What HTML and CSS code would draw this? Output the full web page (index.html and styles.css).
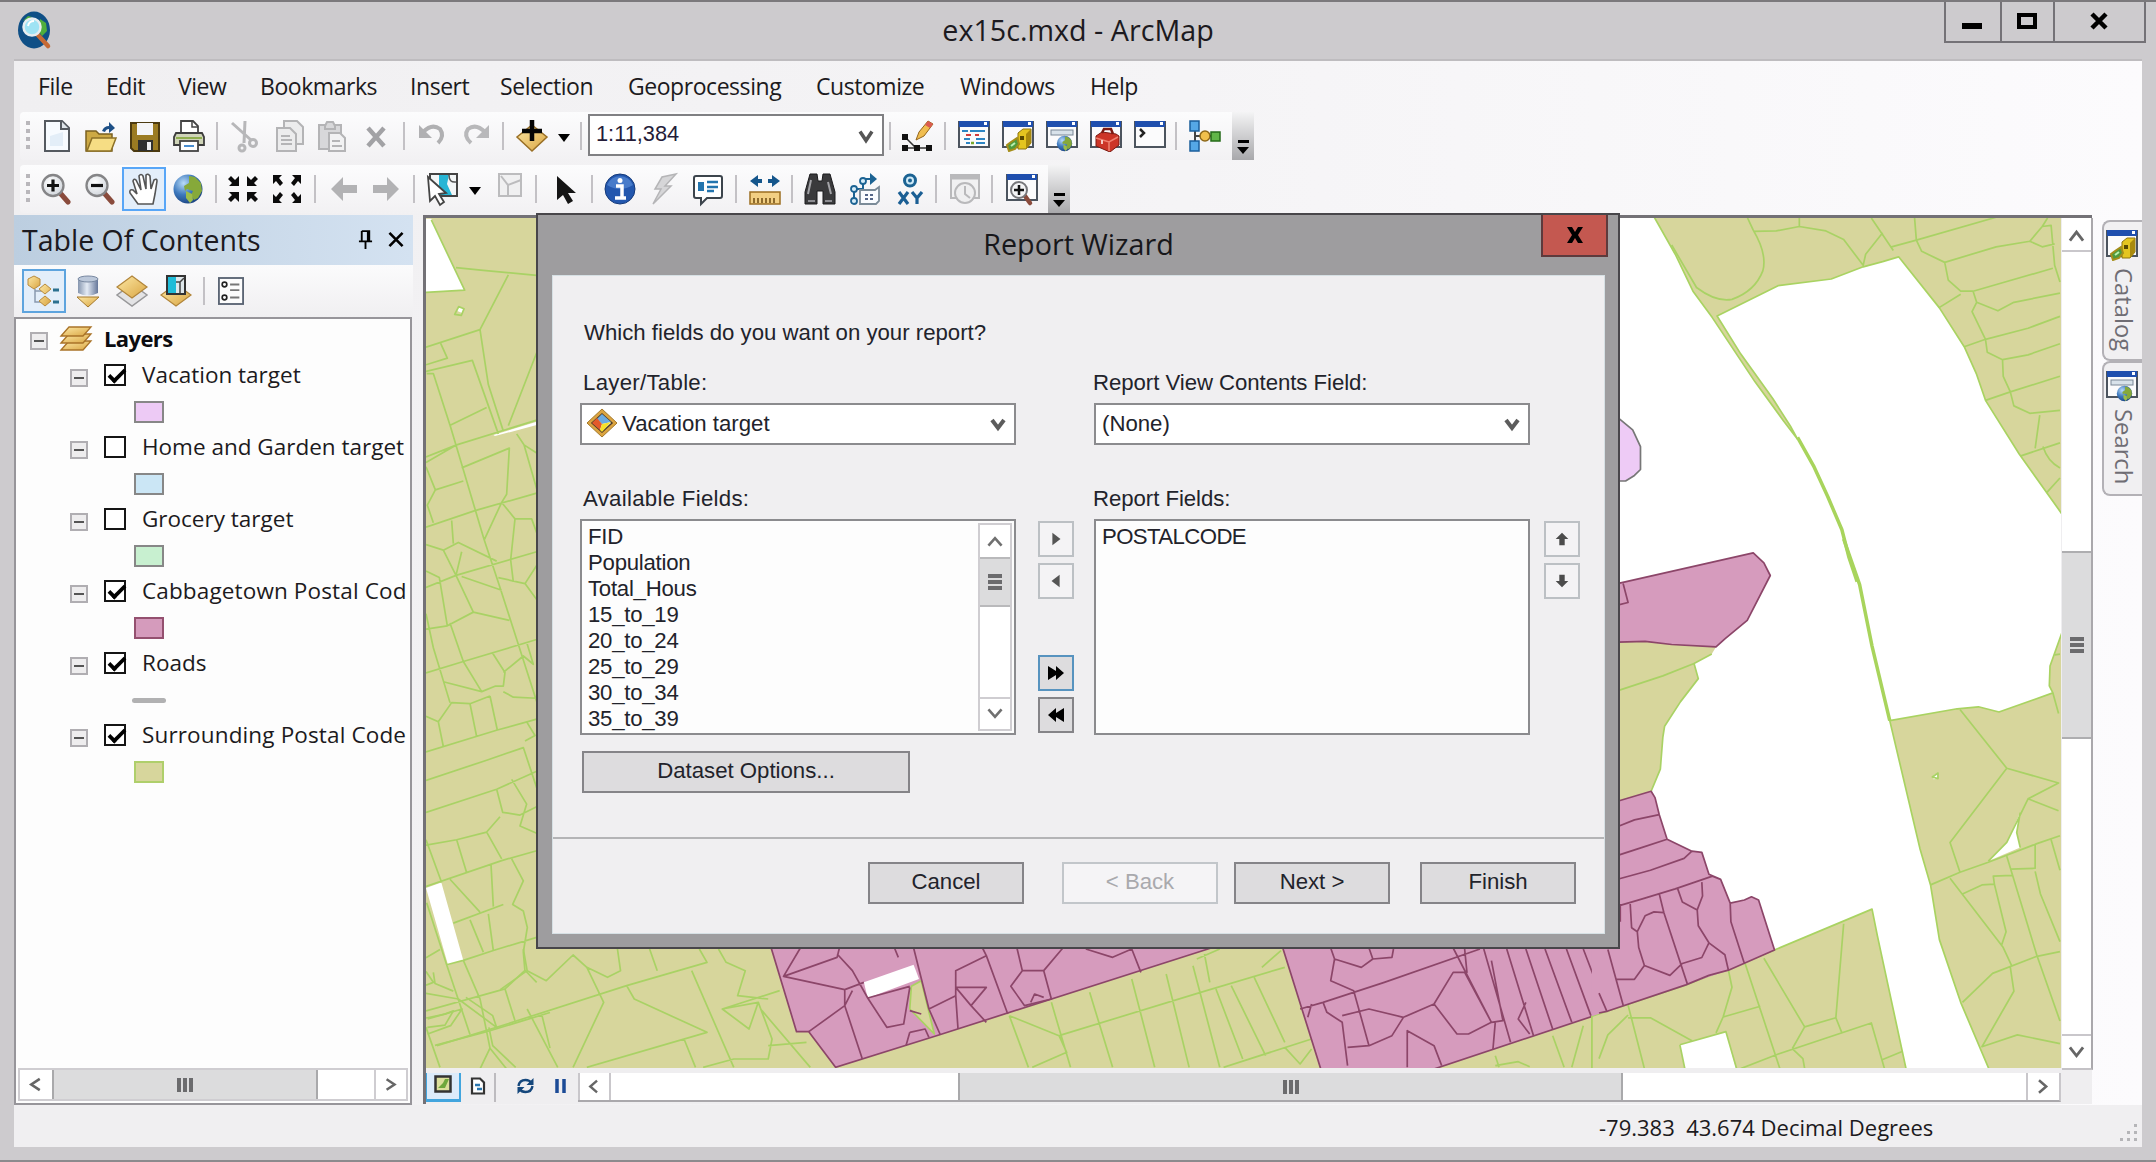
FILE: index.html
```html
<!DOCTYPE html>
<html lang="en">
<head>
<meta charset="utf-8">
<title>ex15c.mxd - ArcMap</title>
<link rel="stylesheet" href="styles.css">
</head>
<body>
<svg class="defs" width="0" height="0">
  <defs>
    <linearGradient id="gold" x1="0" y1="0" x2="1" y2="1"><stop offset="0" stop-color="#fde9a6"/><stop offset="1" stop-color="#d9a441"/></linearGradient>
    <linearGradient id="grey" x1="0" y1="0" x2="1" y2="0"><stop offset="0" stop-color="#8595ae"/><stop offset=".45" stop-color="#e4ebf5"/><stop offset="1" stop-color="#66779a"/></linearGradient>
    <radialGradient id="earth" cx=".35" cy=".3" r=".8"><stop offset="0" stop-color="#b9dcf8"/><stop offset=".5" stop-color="#3d78bd"/><stop offset="1" stop-color="#153b78"/></radialGradient>
    <radialGradient id="lens" cx=".4" cy=".35" r=".7"><stop offset="0" stop-color="#ffffff"/><stop offset="1" stop-color="#cfd4da"/></radialGradient>
    <symbol id="window" viewBox="0 0 32 32">
      <rect x="1" y="2" width="30" height="25" fill="#fbfbfc" stroke="#4c545e" stroke-width="2"/>
      <rect x="1" y="1" width="30" height="6" fill="#1f4fae"/><rect x="26" y="2" width="3" height="3" fill="#fff"/>
    </symbol>
    <symbol id="globe" viewBox="0 0 32 32">
      <circle cx="16" cy="16" r="14.500" fill="url(#earth)"/>
      <path d="M17 3l6 1 6 6 1 8-4 7-4 2-3-5 2-4-6-2-2 2-1-5 5-3z" fill="#86a93a"/><path d="M14 18l6 3 1 6-3 3-4-5z" fill="#9dbd4a"/>
    </symbol>
    <symbol id="catalog" viewBox="0 0 32 32">
      <use href="#window"/>
      <path d="M16 13l5-4h8v14l-5 6h-8z" fill="#e4c520" stroke="#8d7410"/><path d="M24 14l5-5v14l-5 6z" fill="#a98a0d"/><path d="M18 16h4v4h-4z" fill="#584900"/>
      <path d="M5 25l4-3 6-4 2 6-4 5-6 2z" fill="#4f9a3c" stroke="#a58e1a" stroke-width="2"/><path d="M9 26l4-3" stroke="#b9efae" stroke-width="2"/>
    </symbol>
    <symbol id="search" viewBox="0 0 32 32">
      <use href="#window"/><rect x="5" y="10" width="22" height="5" fill="#d8e2ea" stroke="#7a8896"/>
      <svg x="10" y="15" width="17" height="17"><use href="#globe"/></svg>
    </symbol>
    <symbol id="toolbox" viewBox="0 0 32 32">
      <use href="#window"/><path d="M6 16l6-4 14 2 3 2v9l-9 7-14-6z" fill="#cc3527" stroke="#7d1a12"/><path d="M6 18l13 4 9-5M19 22v9" stroke="#f08170" fill="none" stroke-width="1.500"/><path d="M12 13l2-4h7l2 5" stroke="#7d1a12" fill="none" stroke-width="2.500"/><path d="M12 20v4" stroke="#f4c9c0" stroke-width="2"/>
    </symbol>
    <symbol id="glass" viewBox="0 0 32 32">
      <path d="M21 21l7 8" stroke="#8a4b3c" stroke-width="5" stroke-linecap="round"/>
      <circle cx="13" cy="12.500" r="10.500" fill="url(#lens)" stroke="#858587" stroke-width="2.300"/>
    </symbol>
  </defs>
</svg>

<header class="titlebar">
  <svg class="app-icon" viewBox="0 0 32 38"><ellipse cx="16" cy="19" rx="16" ry="18.500" fill="#0f4f86"/><path d="M22 8l6 4 1 8-5 5-4-6zM5 10l5-5 4 1z" fill="#4fae3d"/><path d="M19 23l11 12" stroke="#c66a35" stroke-width="4.500" stroke-linecap="round"/><circle cx="14" cy="16" r="8.500" fill="#9fe3f4" stroke="#e8edf0" stroke-width="2.500"/><path d="M10 15q1-5 6-5" stroke="#fff" stroke-width="2" fill="none"/></svg>
  <h1 class="window-title">ex15c.mxd - ArcMap</h1>
  <div class="window-buttons">
    <button class="wb wb-min"><svg viewBox="0 0 20 18"><path d="M0 14h20" stroke="#000" stroke-width="6"/></svg></button>
    <button class="wb wb-max"><svg viewBox="0 0 20 18"><rect x="2" y="3" width="16" height="12" fill="none" stroke="#000" stroke-width="4"/></svg></button>
    <button class="wb wb-close"><svg viewBox="0 0 20 18"><path d="M3 2l14 14M17 2L3 16" stroke="#000" stroke-width="4.500"/></svg></button>
  </div>
</header>

<div class="client">
  <nav class="menubar">
    <span>File</span><span>Edit</span><span>View</span><span>Bookmarks</span><span>Insert</span><span>Selection</span><span>Geoprocessing</span><span>Customize</span><span>Windows</span><span>Help</span>
  </nav>

  <div class="toolbar standard">
    <i class="grip"></i>
    <span class="tool"><svg viewBox="0 0 32 32"><path d="M4 1h17l7 7v23H4z" fill="#f7fbff" stroke="#555a60" stroke-width="2"/><path d="M20 1v8h8" fill="#dfe5ea" stroke="#555a60" stroke-width="2"/><path d="M9 16v10h13V12" fill="#e3eef8"/></svg></span>
    <span class="tool"><svg viewBox="0 0 32 32"><path d="M1 11h10l3 3h13v17H1z" fill="#cda944" stroke="#7a6020" stroke-width="1.500"/><path d="M7 18h24l-5 13H2z" fill="#f6dd84" stroke="#8d7127" stroke-width="1.500"/><path d="M17 11q2-5 7-5V2l6 6-6 5V9q-3 0-4 3z" fill="#1d4f86"/></svg></span>
    <span class="tool"><svg viewBox="0 0 32 32"><path d="M2 3h28v28H5l-3-3z" fill="#9b7b22" stroke="#4c3a10" stroke-width="2"/><rect x="8" y="3" width="16" height="12" fill="#f4f4f6"/><rect x="9" y="20" width="15" height="11" fill="#30302e"/><rect x="18" y="22" width="4" height="8" fill="#f0f0f0"/></svg></span>
    <span class="tool"><svg viewBox="0 0 32 32"><path d="M8 14V1h12l5 5v8" fill="#fff" stroke="#444" stroke-width="1.800"/><path d="M19 1v6h6" fill="none" stroke="#444" stroke-width="1.500"/><path d="M3 13h26l2 4v8H1v-8z" fill="#cfd4b8" stroke="#3d3d3d" stroke-width="1.800"/><path d="M3 18h26" stroke="#8fae4e" stroke-width="2"/><rect x="7" y="21" width="18" height="10" fill="#fff" stroke="#444" stroke-width="1.800"/><path d="M11 26h10" stroke="#4a8ed0" stroke-width="2"/></svg></span>
    <i class="sep"></i>
    <span class="tool"><svg viewBox="0 0 32 32" fill="none" stroke="#b7b7b9" stroke-width="3"><path d="M4 3l19 17M17 1l-1 22" /><circle cx="14" cy="28" r="3"/><circle cx="25" cy="23" r="3.500"/></svg></span>
    <span class="tool nudge"><svg viewBox="0 0 32 32" fill="#ececed" stroke="#b4b4b6" stroke-width="2"><path d="M10 1h13l6 6v17H10z"/><path d="M3 8h13l6 6v17H3z"/><path d="M7 16h9M7 20h11M7 24h11"/></svg></span>
    <span class="tool"><svg viewBox="0 0 32 32" fill="#d8d8da" stroke="#b4b4b6" stroke-width="2"><path d="M3 5h22v24H3z"/><path d="M9 6l2-4h6l2 4v3H9z"/><path d="M13 13h11l5 5v13H13z" fill="#f2f2f3"/><path d="M16 21h8M16 26h10"/></svg></span>
    <span class="tool"><svg viewBox="0 0 32 32"><path d="M8 8l16 18M24 8L8 26" stroke="#a2a2a5" stroke-width="4.500"/></svg></span>
    <i class="sep"></i>
    <span class="tool nudge"><svg viewBox="0 0 32 32"><path d="M6 12q9-9 17-3 5 7-2 14" fill="none" stroke="#b0b0b2" stroke-width="4"/><path d="M2 5v13h13z" fill="#b0b0b2"/></svg></span>
    <span class="tool"><svg viewBox="0 0 32 32"><path d="M26 12q-9-9-17-3-5 7 3 14" fill="none" stroke="#b8b8ba" stroke-width="4"/><path d="M30 5v13H17z" fill="#b8b8ba"/></svg></span>
    <i class="sep"></i>
    <span class="tool nudge"><svg viewBox="0 0 32 32"><path d="M16 5l15 12-15 14L1 17z" fill="url(#gold)" stroke="#9a7026" stroke-width="1.500"/><path d="M16 0v21M6 11h20" stroke="#050505" stroke-width="4.500"/></svg></span>
    <i class="caret"></i>
    <i class="sep"></i>
    <span class="scale">1:11,384<svg viewBox="0 0 16 14"><path d="M2 2l6 9 6-9" fill="none" stroke="#555" stroke-width="3.500"/></svg></span>
    <i class="sep"></i>
    <span class="tool"><svg viewBox="0 0 32 32"><path d="M4 17l11 11M4 28h24" stroke="#333" stroke-width="1.500"/><path d="M1 14h6v6H1zM1 25h6v6H1zM13 25h6v6h-6zM25 25h6v6h-6z" fill="#111"/><path d="M15 20l3-8L27 1l5 3-9 12z" fill="#f0bd50" stroke="#94651c"/><path d="M27 1l5 3-3 4-5-3z" fill="#db5b51"/></svg></span>
    <i class="sep"></i>
    <span class="tool nudge"><svg viewBox="0 0 32 32"><use href="#window"/><path d="M4 11h6M12 11h15M8 23h4M18 23h9M6 19h6" stroke="#2e86c4" stroke-width="2"/><path d="M8 15h5M17 15h4" stroke="#d23b3b" stroke-width="2"/><path d="M18 19h9" stroke="#2e86c4" stroke-width="2"/><path d="M13 23h3" stroke="#7aa92b" stroke-width="2.500"/></svg></span>
    <span class="tool nudge"><svg viewBox="0 0 32 32"><use href="#catalog"/></svg></span>
    <span class="tool nudge"><svg viewBox="0 0 32 32"><use href="#search"/></svg></span>
    <span class="tool nudge"><svg viewBox="0 0 32 32"><use href="#toolbox"/></svg></span>
    <span class="tool nudge"><svg viewBox="0 0 32 32"><use href="#window"/><path d="M6 9l4 4-4 4" fill="none" stroke="#222" stroke-width="2.500"/></svg></span>
    <i class="sep"></i>
    <span class="tool nudge"><svg viewBox="0 0 32 32"><path d="M6 6v20M6 16h20" stroke="#444" stroke-width="2"/><rect x="1" y="1" width="9" height="10" fill="#55a8e6" stroke="#1a5e9b" stroke-width="1.500"/><rect x="1" y="21" width="9" height="10" fill="#55a8e6" stroke="#1a5e9b" stroke-width="1.500"/><circle cx="16" cy="16" r="5" fill="#f0bf4c" stroke="#8d6819" stroke-width="1.500"/><rect x="22" y="12" width="9" height="9" fill="#61b648" stroke="#256a18" stroke-width="1.500"/></svg></span>
    <i class="overflow"></i>
  </div>

  <div class="toolbar tools">
    <i class="grip"></i>
    <span class="tool"><svg viewBox="0 0 32 32"><use href="#glass"/><path d="M13 6.500v12M7 12.500h12" stroke="#111" stroke-width="3.200"/></svg></span>
    <span class="tool"><svg viewBox="0 0 32 32"><use href="#glass"/><path d="M7 12.500h12" stroke="#111" stroke-width="3.200"/></svg></span>
    <span class="tool active"><svg viewBox="0 0 32 32"><path d="M10 31L2 20q-1-4 3-3l4 4L5 8q1-3 3-1l5 10L11 3q2-3 4 0l3 13V2q2-2 4 1l1 13 3-9q3-2 3 1l-2 13-2 10z" fill="#fff" stroke="#555" stroke-width="1.600"/></svg></span>
    <span class="tool"><svg viewBox="0 0 32 32"><use href="#globe"/></svg></span>
    <i class="sep"></i>
    <span class="tool"><svg viewBox="0 0 32 32" fill="#0b0b0b"><path id="corner-in" d="M12 3v10H2l3-3-4-4 3-3 4 4z"/><use href="#corner-in" transform="matrix(-1 0 0 1 32 0)"/><use href="#corner-in" transform="matrix(1 0 0 -1 0 32)"/><use href="#corner-in" transform="rotate(180 16 16)"/></svg></span>
    <span class="tool"><svg viewBox="0 0 32 32" fill="#0b0b0b"><path id="corner-out" d="M2 2h9L8 5l4 5-3 3-4-5-3 3z"/><use href="#corner-out" transform="matrix(-1 0 0 1 32 0)"/><use href="#corner-out" transform="matrix(1 0 0 -1 0 32)"/><use href="#corner-out" transform="rotate(180 16 16)"/></svg></span>
    <i class="sep"></i>
    <span class="tool nudge"><svg viewBox="0 0 32 32"><path d="M3 16L15 4v8h14v8H15v8z" fill="#b2b2b4"/></svg></span>
    <span class="tool"><svg viewBox="0 0 32 32"><path d="M29 16L17 4v8H3v8h14v8z" fill="#b2b2b4"/></svg></span>
    <i class="sep"></i>
    <span class="tool nudge"><svg viewBox="0 0 32 32"><rect x="3" y="1" width="27" height="22" fill="#f3f6f7" stroke="#444" stroke-width="2"/><path d="M12 2h10l-2 9 5 11H12z" fill="#27b5d5"/><path d="M22 2q0 8 7 7" stroke="#555" fill="none" stroke-width="1.500"/><path d="M1 4l18 16-7 1 5 8-4 3-5-9-5 5z" fill="#fff" stroke="#444" stroke-width="1.800"/></svg></span>
    <i class="caret"></i>
    <span class="tool nudge"><svg class="small" viewBox="0 0 24 24"><rect x="1" y="1" width="22" height="22" fill="#f0f0f1" stroke="#bcbcbe" stroke-width="2"/><path d="M3 3l7 9 13-5M10 12v10" fill="none" stroke="#bcbcbe" stroke-width="2"/></svg></span>
    <i class="sep"></i>
    <span class="tool nudge"><svg viewBox="0 0 32 32"><path d="M8 3v24l6-5 5 9 5-3-5-8h8z" fill="#151515"/></svg></span>
    <i class="sep w14"></i>
    <span class="tool"><svg viewBox="0 0 32 32"><circle cx="16" cy="16" r="15" fill="#2357ae" stroke="#153a7a"/><path d="M3 12a14 14 0 0 1 26 0q-13 8-26 0" fill="#5f92dc" opacity=".6"/><path d="M12 13h6v11M11 25h11" stroke="#fff" stroke-width="3.500" fill="none"/><circle cx="16" cy="7.500" r="2.500" fill="#fff"/></svg></span>
    <span class="tool"><svg viewBox="0 0 32 32"><path d="M28 1L14 4 7 16h6L5 31 23 13h-6z" fill="#d6d6d8" stroke="#b5b5b7" stroke-width="1.500"/></svg></span>
    <span class="tool"><svg viewBox="0 0 32 32"><path d="M4 3h24q2 0 2 2v18q0 2-2 2H15l-6 6v-6H4q-2 0-2-2V5q0-2 2-2z" fill="#fff" stroke="#3c444c" stroke-width="2"/><rect x="6" y="9" width="6" height="9" fill="#2274ae"/><path d="M15 9h11M15 14h11M15 18h7" stroke="#2274ae" stroke-width="2.500"/></svg></span>
    <i class="sep"></i>
    <span class="tool nudge"><svg viewBox="0 0 32 32"><rect x="1" y="19" width="30" height="12" fill="#f2cf83" stroke="#9c6f22" stroke-width="1.500"/><path d="M5 30v-5M9 30v-5M13 30v-5M17 30v-5M21 30v-5M25 30v-5" stroke="#6d4b12" stroke-width="1.500"/><path d="M1 8l8-6v4h4v4H9v4zM31 8l-8-6v4h-4v4h4v4z" fill="#15568c"/></svg></span>
    <i class="sep w14"></i>
    <span class="tool"><svg viewBox="0 0 32 32"><path d="M6 1h7l1 7h4l1-7h7l5 18v12H19V18h-6v13H1V19z" fill="#3a3a3c" stroke="#1b1b1d"/><path d="M7 7l-3 14M24 9l3 12" stroke="#a4a4a8" stroke-width="2"/><path d="M4 28h7M21 28h7" stroke="#8d8d92" stroke-width="2"/></svg></span>
    <span class="tool nudge"><svg viewBox="0 0 32 32"><path d="M4 27V16h9V6h9" fill="none" stroke="#1c6393" stroke-width="2"/><path d="M20 0l7 6-7 6z" fill="#1c6393"/><circle cx="4" cy="16" r="3" fill="#d6ecf8" stroke="#1c6393" stroke-width="1.800"/><circle cx="4" cy="28" r="3" fill="#d6ecf8" stroke="#1c6393" stroke-width="1.800"/><circle cx="13" cy="8" r="3" fill="#d6ecf8" stroke="#1c6393" stroke-width="1.800"/><path d="M10 17h15l4-3v14l-3 3H10z" fill="#fafcff" stroke="#7b8b98" stroke-width="1.800"/><path d="M15 22h8M15 26h8" stroke="#568" stroke-width="1.800" stroke-dasharray="3 2"/></svg></span>
    <span class="tool nudge"><svg viewBox="0 0 32 32"><circle cx="16" cy="7.500" r="5.500" fill="#cfeaf7" stroke="#1c6393" stroke-width="3"/><circle cx="16" cy="7.500" r="2" fill="#1c6393"/><path d="M5 19l9 12M14 19L5 31M18 19l5 6 5-6M23 25v6" stroke="#1b5f94" stroke-width="3.200" fill="none"/></svg></span>
    <i class="sep"></i>
    <span class="tool nudge"><svg viewBox="0 0 32 32"><rect x="2" y="2" width="28" height="23" fill="#f1f1f2" stroke="#b9b9bb" stroke-width="2"/><path d="M1 4h30" stroke="#b9b9bb" stroke-width="5"/><circle cx="16" cy="20" r="10" fill="#efeff0" stroke="#b9b9bb" stroke-width="2"/><path d="M16 13v8l5 4" fill="none" stroke="#b9b9bb" stroke-width="2"/></svg></span>
    <i class="sep w14"></i>
    <span class="tool nudge"><svg viewBox="0 0 32 32"><use href="#window"/><path d="M19 23l5 7" stroke="#8a4b3c" stroke-width="4.500" stroke-linecap="round"/><circle cx="13" cy="17" r="8" fill="#f4f4f5" stroke="#77777a" stroke-width="2"/><path d="M13 12v10M8 17h10" stroke="#111" stroke-width="2.500"/></svg></span>
    <i class="overflow"></i>
  </div>

  <main class="workspace">
    <section class="toc">
      <h2 class="toc-title">Table Of Contents
        <svg class="pin" viewBox="0 0 16 20"><path d="M4 1h8v10M4 1v10M1 12h14M8 12v8" fill="none" stroke="#000" stroke-width="2"/><path d="M11 1v11" stroke="#000" stroke-width="3"/></svg>
        <svg class="close" viewBox="0 0 16 16"><path d="M1 1l14 14M15 1L1 15" stroke="#000" stroke-width="2.800"/></svg>
      </h2>
      <div class="toc-tools">
        <span class="tool active"><svg viewBox="0 0 32 32"><path d="M7 14v13h8M7 16h8" fill="none" stroke="#8b9ab0" stroke-width="1.500"/><path d="M6 1l6 3v6l-6 4-6-4V4z" fill="url(#gold)" stroke="#b88a3c"/><path d="M17 9l6 5-6 5-6-5zM17 21l6 5-6 5-6-5z" fill="url(#gold)" stroke="#b88a3c"/><path d="M25 15h6M25 27h6" stroke="#2b7090" stroke-width="3"/></svg></span>
        <span class="tool"><svg viewBox="0 0 32 32"><path d="M5 22h22L16 32z" fill="url(#gold)" stroke="#a5782b"/><path d="M6 4v14q10 5 20 0V4z" fill="url(#grey)"/><ellipse cx="16" cy="4" rx="10" ry="3" fill="#bcc8da" stroke="#7787a0"/></svg></span>
        <span class="tool"><svg viewBox="0 0 32 32"><path d="M16 9l15 11-15 11L1 20z" fill="#e3e3e5" stroke="#98989a" stroke-width="1.500"/><path d="M16 1l15 11-15 11L1 12z" fill="url(#gold)" stroke="#b1853a" stroke-width="1.200"/></svg></span>
        <span class="tool"><svg viewBox="0 0 32 32"><path d="M16 9l15 11-15 11L1 20z" fill="url(#gold)" stroke="#b1853a" stroke-width="1.200"/><rect x="7" y="1" width="18" height="18" fill="#dfe8ec" stroke="#333" stroke-width="2"/><path d="M8 2h8v16H8z" fill="#20bcd8"/><path d="M16 7h4l4-4M20 7v11" stroke="#444" fill="none" stroke-width="1.500"/></svg></span>
        <i class="sep"></i>
        <span class="tool"><svg class="list-icon" viewBox="0 0 28 30"><rect x="1" y="1" width="26" height="28" fill="#fcfcfc" stroke="#5b6574" stroke-width="2"/><circle cx="7" cy="8" r="2.500" fill="none" stroke="#222" stroke-width="1.800"/><circle cx="7" cy="22" r="2.500" fill="none" stroke="#222" stroke-width="1.800"/><path d="M13 8h10M13 14h10M13 22h10" stroke="#777" stroke-width="2"/></svg></span>
      </div>
      <div class="tree">
        <div class="row root"><i class="minus"></i>
          <svg class="layers" viewBox="0 0 32 26"><g fill="url(#gold)" stroke="#a97328" stroke-width="1.300"><path d="M1 25l8-9h22l-8 9z"/><path d="M1 18l8-9h22l-8 9z"/><path d="M1 11l8-9h22l-8 9z"/></g></svg><b>Layers</b></div>
        <div class="row"><i class="minus"></i><i class="check on"></i>Vacation target</div><div class="legend"><i class="swatch pink"></i></div>
        <div class="row"><i class="minus"></i><i class="check"></i>Home and Garden target</div><div class="legend"><i class="swatch blue"></i></div>
        <div class="row"><i class="minus"></i><i class="check"></i>Grocery target</div><div class="legend"><i class="swatch green"></i></div>
        <div class="row wide"><i class="minus"></i><i class="check on"></i>Cabbagetown Postal Cod</div><div class="legend"><i class="swatch plum"></i></div>
        <div class="row"><i class="minus"></i><i class="check on"></i>Roads</div><div class="legend"><i class="line"></i></div>
        <div class="row wide"><i class="minus"></i><i class="check on"></i>Surrounding Postal Code</div><div class="legend"><i class="swatch olive"></i></div>
        <div class="hscroll toc-scroll">
          <svg class="sb" viewBox="0 0 34 30"><path d="M21 9l-9 6 9 6" fill="none" stroke="#666" stroke-width="2.800"/></svg>
          <span class="thumb"><i class="ridges"></i></span><span class="track"></span>
          <svg class="sb" viewBox="0 0 34 30"><path d="M12 9l9 6-9 6" fill="none" stroke="#666" stroke-width="2.800"/></svg>
        </div>
      </div>
    </section>

    <section class="mapframe">
      <svg class="map" viewBox="426 219 1635 850" preserveAspectRatio="none">
        <rect x="420" y="210" width="1650" height="870" class="land"/>
        <!-- left edge -->
        <g transform="translate(420 210) scale(.33333 .54847)">
          <path class="void" d="M16 18H34L134 148 16 152zM112 186l6-8 14 4-4 8zM220 412l130-24v6L225 414zM18 1238l46-10 66 142-46 8z"/>
          <path class="road" d="M34 20L134 148 18 152M104 192l12-14 16 4-8 12zM108 107L190 112 350 121M18 252L180 220 265 120M180 220L205 320 250 405M62 245L82 272 18 284M18 296L157 276 235 410M20 300h20L92 398 192 602 240 690 350 898M92 394L200 362M18 452L110 430 350 385M265 395L350 262M125 472L268 436 260 520 245 535M18 462L110 430M18 580L165 550 350 518M245 535L192 604M245 535L285 565H335L350 590M285 565L272 640 280 680M312 430L350 510M290 410L312 430 350 445M18 470L46 512 130 496M46 512L22 540 40 572M95 568L100 610M18 612L70 622 115 608 230 642M70 622L108 668 125 625M18 690L108 668 350 625M108 668L160 735 268 750M18 660L58 672 82 760M125 670L245 695M235 672L315 683 350 712M315 683L350 650M18 766L82 760 160 735M18 738L40 800 90 900M18 846L130 825 350 785M90 755L130 825 185 880M70 862L185 880 225 870 250 870 255 845 218 810M250 845L310 815 340 830 320 790M250 880L280 890 350 892M18 925L55 935 95 900 150 902 210 888M55 935L70 980M150 902L170 962M210 888L232 950M18 990L232 950 350 930M320 935L345 960 315 970M18 1042L200 1005 310 982 350 1055M18 1100L230 1058 350 1025M230 1058L248 1100 300 1105 350 1090M275 1040L320 1085 300 1125 350 1138M18 1160L110 1150 200 1136 240 1108M200 1136L245 1185M110 1150L140 1210M18 1150L65 1228M18 1235L245 1188 350 1170M213 1195L220 1272M275 1185L310 1225 278 1268 310 1280 322 1310 310 1355 315 1390M90 1222L180 1282M100 1302L250 1268M150 1296L190 1355M205 1285L220 1352M130 1370L220 1352 350 1328M20 1265L80 1378 130 1370 180 1440 210 1530 180 1568M80 1378L150 1505M18 1365L60 1350M18 1390L40 1410 18 1415M40 1392L45 1412 100 1426M18 1462L255 1422 315 1388 350 1410M255 1422L285 1480M18 1475L75 1468 100 1462 75 1488 22 1492M18 1492L60 1565M45 1525L200 1500 390 1465M210 1530L260 1568M365 1468L390 1530"/>
        </g>
        <!-- southern blocks -->
        <g transform="translate(420 900) scale(.76531 .33333)">
          <path class="road" d="M105 272L140 215 135 150M140 215L165 245 200 168 218 205 245 235 262 215 258 150M300 150L310 215M270 260L375 190 365 150M22 440L100 385 270 260M140 330L180 505M100 385L95 350 60 295M270 260L280 300 375 400 218 505M390 150L400 190 425 215 415 290 455 300M355 215L410 505M395 330L430 390 442 310 395 330 470 275M442 310L460 420 455 480 410 480 370 505M345 420L360 505M218 205L240 310 200 505M445 330L510 505M455 440L505 430M90 385L95 440 125 505M0 280L50 300 100 385M10 360L55 330 40 380 10 405M770 350L835 410 1020 280 1130 205M835 410L845 460 800 505M770 350L795 505M825 310L850 505M875 280L905 505M930 240L960 505M975 225L1005 505M1010 200L1045 505M1040 270L1075 480M1060 260L1105 470M1090 235L1130 430M1050 505L1165 420M1025 165L1032 250M1130 445L1150 495 1165 450M1100 205L1125 155M1015 180L1045 150M1405 470l5 35M1405 500l30-12 15 15M1480 410l15 95M1520 380l-15 125"/>
          <path class="core line" d="M458 140L492 398H508L543 505 678 408 1050 135zM1125 130L1177 510H1325L1600 300 1600 130z"/>
          <path class="land line" d="M655 245L642 262 640 330 672 405z"/><path class="void" d="M580 250L645 197 652 240 585 297z"/>
          <path class="block" d="M497 147L475 232 555 272 580 250M475 232L545 175 548 147M545 165L565 215 585 297 610 385 632 375 640 265M585 297L640 262M555 272L555 320 508 398M555 320L578 480M555 320L565 275M620 147L625 175M645 147L665 330 680 408M665 330L700 290V215L740 170 735 147M740 170L768 345M700 265H740L720 320 700 265M700 290L703 390M720 320L740 370M780 147L787 215 772 262 790 320 825 300 815 215 787 215M815 215L840 147M870 150L905 175 930 150 942 220M798 310L803 285 815 295M640 400L660 390 665 415M640 400L635 440M655 345L640 335M1150 330L1180 310 1260 250 1385 150M1190 147L1195 180 1230 205 1245 180 1270 175 1272 150M1195 180L1190 245 1220 275 1240 440M1245 180L1240 147M1180 310L1185 340 1205 370 1212 500M1205 350L1240 330 1285 355 1270 410 1240 440 1212 445M1285 355L1325 315 1350 220 1368 220 1365 150M1325 315L1355 405 1370 405 1400 370 1365 220M1165 315L1160 355M1290 505V395L1325 440 1335 500M1350 147L1400 370 1415 365 1400 185M1390 150L1425 430M1420 150L1455 410M1445 150L1480 390M1470 150L1505 370M1498 150L1530 350M1445 310L1435 360 1450 405M1520 150L1550 330M1545 150L1565 300M1405 370L1402 450"/>
        </g>
        <!-- valley and eastern blocks -->
        <rect x="1604" y="210" width="460" height="730" class="void"/>
        <g transform="translate(1599 540) scale(.35459 .39668)">
          <path class="void" d="M300 700H1310V1340H300z"/>
          <path class="land line" d="M-20 1340V1203L245 1124 495 1036 770 933 785 1000 867 1340z"/>
          <path class="void" d="M228 1275L358 1242 388 1340H242z"/>
          <path class="land" d="M0 262L130 258 330 272 318 290 268 314 280 352 230 410 185 472 180 500 173 580 147 636 0 675z"/>
          <path class="road" d="M318 290L268 314 280 352 230 410 185 472 180 500 173 580 147 636M0 398L180 345 268 314M228 1275L358 1242 388 1335M228 1275L242 1335M0 1310L25 1250 82 1200M82 1175L128 1335M82 1207L145 1207 262 1265M365 1087L375 1130 350 1205 330 1245M350 1205L455 1178M412 1070L510 1335M465 1057L580 1230 545 1285M580 1230L668 1207 685 1245M690 970L668 1207M400 1335L500 1300 768 1220 805 1335M545 1285L575 1310 580 1335M800 1312L855 1292"/>
          <path class="core line" d="M-20 122L55 112 435 35 465 60 483 92 418 205 355 252 330 272 205 266 130 258 -20 262z"/>
          <path class="core" d="M-20 680L147 636 158 652 170 695 192 757 262 787 290 790 310 845 343 858 370 918 410 910 430 902 450 910 495 1036 365 1087 245 1124 -20 1203z"/>
          <path class="block" d="M0 675L147 636 158 652 170 695 192 757 262 787 290 790 310 845 343 858 370 918 410 910 430 902 450 910 495 1036 365 1087 310 1100 245 1124 25 1190 0 1195M68 112L82 160 55 166M55 724L100 708 170 695M55 797L120 778 192 757M55 857L145 835 240 805 262 787M55 925L120 908 215 882 320 850 343 858M60 920V965M88 920L92 980 108 990 112 1030 128 1075 100 1110H50M108 990L130 950 155 940 183 942M170 895L183 942 250 1124M128 1075L200 1100 235 1070 290 1055 310 1018 280 975 277 935 235 915 222 882M290 865L292 900 277 935M310 1018L355 1048 365 1087M370 918L372 965 410 1070M25 1035L68 1175M0 1145L22 1190"/>
          <path class="land line" d="M820 458L1010 428 1070 423 1128 436 1280 388 1270 370 1272 320 1310 225V1345H1104L1020 1168 960 1010 935 872 905 780z"/>
          <path class="void" d="M1185 695L1150 765 1098 812 1188 778 1178 740zM942 596l12-6v12l-10 4z"/>
          <path class="road" d="M1280 388L1296 440M1285 292L1300 290M1018 430L1150 578 1296 615 1210 655 1150 765 1098 812M1150 578L990 765 1018 840M1210 655L1296 685M1188 690L1178 740 1188 778M935 872L1018 840 1098 815 1235 768 1300 748M990 855L1140 1030 1165 1078M1025 895L1080 872 1115 870 1112 850 1165 848M1115 870L1148 990 1135 1025M1150 800L1235 1050 1300 1215M1230 768L1230 830 1160 832M1230 838L1245 895 1300 1015M1275 758L1300 835M1025 1168L1110 1095 1235 1052 1300 1040M1160 1080L1170 1140 1080 1280 1180 1250 1300 1272M940 600l16-10v14z"/>
          <path class="strip" d="M690 0L735 115 770 270 820 458"/>
        </g>
        <g transform="translate(1599 0) scale(.35459 .3699)">
          <path class="land line" d="M150 580L215 690 265 790 320 862 440 1035 520 1140 560 1190 540 1155 490 1080 400 960 333 857 505 775 655 757 745 724 800 710 845 697 960 835 1030 940 1065 1015 1090 1085 1185 1230 1315 1405V580z"/>
          <path class="road" d="M205 665L275 780Q330 820 375 812 440 790 462 735 475 690 435 625L418 590M435 628L500 627 565 615 640 627 690 650 745 720 752 690 800 632M565 615V592M768 592L830 680M825 670L895 652 1120 590M890 592L895 652 910 682 975 712 985 760 1020 790 1055 790 1280 728M975 712L1120 670 1215 655 1250 615 1265 592M1215 655L1250 670 1285 662M1250 615L1275 612 1285 720 1300 765M958 835L1020 798M1055 790L1065 820 1052 845 1090 920M1065 820L1125 843 1170 820 1300 795M1030 940L1090 920 1210 890 1300 858M1090 920L1095 955 1138 975 1140 1020 1160 1062 1170 1100 1215 1120 1300 1112M1138 975L1210 962 1300 932M1090 1085L1160 1062 1300 1020M1243 1125L1230 1215M1190 1235L1300 1200M1252 1210Q1265 1250 1300 1268M1262 1335L1300 1295"/>
          <path class="strip" d="M560 1185L605 1262 645 1345 685 1435 705 1510 728 1575"/>
          <path class="circle" d="M40 1120L55 1133 95 1165 117 1210V1272L100 1288 75 1303H40z"/>
        </g>
      </svg>
      <div class="vscroll map-v">
        <svg class="sb" viewBox="0 0 28 34"><path d="M7 24l7-9 7 9" fill="none" stroke="#666" stroke-width="3"/></svg>
        <span class="track top"></span><span class="thumb"><i class="ridges v"></i></span><span class="track"></span>
        <svg class="sb" viewBox="0 0 28 34"><path d="M7 12l7 9 7-9" fill="none" stroke="#666" stroke-width="3"/></svg>
      </div>
      <div class="map-bottom">
        <span class="view on"><svg viewBox="0 0 18 18"><rect x="1.500" y="1.500" width="15" height="15" fill="#dcdf9b" stroke="#333" stroke-width="2.500"/><path d="M4 13l5-5 2-4h4l-4 9z" fill="#6fa83c"/></svg></span>
        <span class="view page"><svg viewBox="0 0 18 18"><path d="M3 1.500h8l4 4v11H3z" fill="#fff" stroke="#333" stroke-width="2.200"/><path d="M6 8h5M8 12h5" stroke="#2a77b0" stroke-width="2.500"/></svg></span>
        <i class="bar"></i>
        <span class="view refresh"><svg viewBox="0 0 18 18"><path d="M2 9q1-6 7-6 4 0 6 3M16 9q-1 6-7 6-4 0-6-3" fill="none" stroke="#15477c" stroke-width="2.400"/><path d="M17 1v7h-7zM1 17v-7h7z" fill="#15477c"/></svg></span>
        <span class="view pause"><svg viewBox="0 0 18 18"><path d="M5 2v14M12 2v14" stroke="#1c4b96" stroke-width="3.500"/></svg></span>
        <div class="hscroll map-h">
          <svg class="sb" viewBox="0 0 34 30"><path d="M20 8l-8 7 8 7" fill="none" stroke="#666" stroke-width="2.800"/></svg>
          <span class="track left"></span><span class="thumb"><i class="ridges"></i></span><span class="track"></span>
          <svg class="sb" viewBox="0 0 34 30"><path d="M12 8l8 7-8 7" fill="none" stroke="#666" stroke-width="2.800"/></svg>
        </div>
      </div>
    </section>

    <aside class="dock">
      <div class="tab catalog"><svg viewBox="0 0 32 32"><use href="#catalog"/></svg><span>Catalog</span></div>
      <div class="tab searchtab"><svg viewBox="0 0 32 32"><use href="#search"/></svg><span>Search</span></div>
    </aside>
  </main>

  <footer class="status"><span>-79.383&nbsp; 43.674 Decimal Degrees</span>
    <svg viewBox="0 0 18 18" fill="#b5b5b8"><path d="M14 0h3v3h-3zM14 7h3v3h-3zM7 7h3v3H7zM14 14h3v3h-3zM7 14h3v3H7zM0 14h3v3H0z"/></svg></footer>
</div>

<div class="dialog">
  <div class="dialog-title">Report Wizard<button class="dialog-close"><svg viewBox="0 0 18 16"><path d="M1 0h5l3 5 3-5h5l-5 8 5 8h-5l-3-5-3 5H1l5-8z" fill="#000"/></svg></button></div>
  <div class="dialog-body">
    <div class="pane">
      <p class="question">Which fields do you want on your report?</p>
      <div class="col left">
        <label>Layer/Table:</label>
        <div class="combo"><svg class="feat" viewBox="0 0 32 30"><path d="M16 1l15 14-15 14L1 15z" fill="#dba440" stroke="#a5792a"/><path d="M16 6l10 9-10 9-10-9z" fill="#fff" stroke="#4b3a2a" stroke-width="1.500"/><path d="M16 6l9 8-9 2-5-5z" fill="#6cabe0"/><path d="M11 10l5 6-2 6-8-7z" fill="#e35a2a"/><path d="M16 16l9-2-9 10-2-2z" fill="#f7e02a"/></svg>Vacation target<svg class="chev" viewBox="0 0 16 14"><path d="M2 2l6 8 6-8" fill="none" stroke="#5c5c5c" stroke-width="4"/></svg></div>
        <label class="second">Available Fields:</label>
        <div class="listbox">
          <ul><li>FID</li><li>Population</li><li>Total_Hous</li><li>15_to_19</li><li>20_to_24</li><li>25_to_29</li><li>30_to_34</li><li>35_to_39</li></ul>
          <div class="vscroll list-v">
            <svg class="sb" viewBox="0 0 32 32"><path d="M9 21l7-8 7 8" fill="none" stroke="#707070" stroke-width="2.800"/></svg>
            <span class="thumb"><i class="ridges v"></i></span><span class="track"></span>
            <svg class="sb" viewBox="0 0 32 32"><path d="M9 11l7 8 7-8" fill="none" stroke="#707070" stroke-width="2.800"/></svg>
          </div>
        </div>
        <button class="btn dataset">Dataset Options...</button>
      </div>
      <div class="movers">
        <button class="sq dim"><svg viewBox="0 0 20 20"><path d="M6 3l9 7-9 7z" fill="#555"/></svg></button>
        <button class="sq dim"><svg viewBox="0 0 20 20"><path d="M14 3l-9 7 9 7z" fill="#555"/></svg></button>
        <button class="sq all focus"><svg viewBox="0 0 20 20"><path d="M2 3l8 5V3l8 7-8 7v-5l-8 5z" fill="#000"/></svg></button>
        <button class="sq"><svg viewBox="0 0 20 20"><path d="M18 3l-8 5V3l-8 7 8 7v-5l8 5z" fill="#000"/></svg></button>
      </div>
      <div class="col right">
        <label>Report View Contents Field:</label>
        <div class="combo none">(None)<svg class="chev" viewBox="0 0 16 14"><path d="M2 2l6 8 6-8" fill="none" stroke="#5c5c5c" stroke-width="4"/></svg></div>
        <label class="second">Report Fields:</label>
        <div class="listbox"><ul class="caps"><li>POSTALCODE</li></ul></div>
      </div>
      <div class="movers order">
        <button class="sq dim"><svg viewBox="0 0 20 20"><path d="M10 3l7 7h-4v7H7v-7H3z" fill="#4c4c4c"/></svg></button>
        <button class="sq dim"><svg viewBox="0 0 20 20"><path d="M10 17l7-7h-4V3H7v7H3z" fill="#4c4c4c"/></svg></button>
      </div>
    </div>
    <div class="actions">
      <button class="btn">Cancel</button><button class="btn back">&lt; Back</button><button class="btn next">Next &gt;</button><button class="btn finish">Finish</button>
    </div>
  </div>
</div>
</body>
</html>
```
FILE: styles.css
```css
* { box-sizing: border-box; }
body {
  margin: 0; width: 2156px; height: 1162px; overflow: hidden; position: relative;
  display: flex; flex-direction: column; padding: 0 14px 13px;
  background: #cdcbce; border-top: 2px solid #7b797c; border-bottom: 2px solid #8c8a8d;
  font-family: "Open Sans", "Noto Sans", sans-serif; font-size: 22.5px; color: #1c1a20;
}
.defs { position: absolute; }
svg { display: block; overflow: visible; }
button { font: inherit; color: inherit; padding: 0; margin: 0; border-radius: 0; }
h1, h2, p, ul { margin: 0; padding: 0; font-weight: 400; list-style: none; }
i { font-style: normal; display: block; flex: none; }

/* Title bar */
.titlebar { height: 59px; flex: none; display: grid; grid-template-columns: 1fr auto 1fr; border-bottom: 2px solid #bebcbf; }
.app-icon { width: 32px; height: 38px; margin: 9px 0 0 4px; }
.window-title { font-size: 28.7px; line-height: 56px; white-space: pre; }
.window-buttons { display: flex; justify-self: end; height: 41px; margin-right: -4px; border: 2px solid #747277; border-top: 0; }
.wb { border: 0; background: transparent; display: grid; place-items: center; }
.wb + .wb { border-left: 2px solid #747277; }
.wb svg { width: 20px; height: 18px; margin: -2px 2px 0 0; }
.wb-min { width: 54px; } .wb-max { width: 53px; } .wb-close { width: 91px; }

.client { flex: 1; display: flex; flex-direction: column; min-height: 0; background: linear-gradient(90deg, #f0eff1, #f5f4f6 55%, #fcfbfd); }
.menubar { height: 51px; flex: none; padding: 0 0 2px 24px; display: grid; grid-template-columns: 68px 72px 82px 150px 90px 128px 188px 144px 130px 90px; align-items: center; font-size: 23px; letter-spacing: -.45px; }

/* Toolbars */
.toolbar { display: flex; align-items: stretch; height: 48px; flex: none; margin-left: 6px; background: linear-gradient(#fcfcfd, #f2f1f3); border-radius: 4px; }
.toolbar.standard { width: 1234px; margin-bottom: 5px; }
.toolbar.tools { width: 1050px; }
.grip { width: 4px; height: 30px; margin: 9px 4px 0 6px; background: repeating-linear-gradient(#b9b7bb 0 4px, transparent 4px 8px); }
.standard .grip { margin-right: 5px; }
.tool { width: 44px; flex: none; display: grid; place-items: center; }
.tool svg { width: 32px; height: 32px; }
.tool.nudge svg { margin-left: 4px; }
.tool svg.small { width: 24px; height: 24px; margin-top: -8px; }
.tool.active { background: #e3eefa; border: 2px solid #58a6f7; height: 44px; align-self: center; }
.sep { width: 11px; background: linear-gradient(#c3c1c5, #c3c1c5) center / 2px 28px no-repeat; }
.sep.w14 { width: 13px; }
.caret { width: 23px; display: grid; place-items: center; }
.caret::before { content: ""; border: 6px solid transparent; border-top: 8px solid #000; border-bottom: 0; margin-top: 4px; }
.scale { width: 296px; height: 42px; margin: 2px 0 0 2px; padding: 0 8px 2px 6px; border: 2px solid #808083; background: #fff; display: flex; align-items: center; justify-content: space-between; font: 21.8px "Liberation Sans", Arial, sans-serif; color: #241c38; }
.scale svg { width: 16px; height: 15px; margin-top: 4px; }
.overflow { width: 22px; margin-left: auto; background: linear-gradient(#f4f4f5, #a8a8ab); display: flex; flex-direction: column; align-items: center; justify-content: flex-end; padding-bottom: 6px; gap: 4px; }
.overflow::before { content: ""; width: 11px; height: 3px; background: #000; }
.overflow::after { content: ""; border: 6px solid transparent; border-top: 7px solid #000; border-bottom: 0; }

/* Workspace */
.workspace { flex: 1; min-height: 0; display: flex; margin-top: 2px; }
.toc { width: 399px; flex: none; display: flex; flex-direction: column; }
.toc-title { height: 50px; flex: none; display: flex; align-items: center; font-size: 28.5px; padding: 0 9px 0 8px; background: linear-gradient(90deg, #bccee0, #d4e2f1); white-space: nowrap; line-height: 50px; }
.pin { width: 15px; height: 19px; margin: 0 0 2px auto; }
.toc-title .close { width: 16px; height: 15px; margin: 0 0 2px 15px; }
.toc-tools { height: 52px; flex: none; display: flex; align-items: center; padding-left: 8px; background: linear-gradient(#fbfbfc, #f0eff1); }
.toc-tools .sep { height: 100%; }
.toc-tools .tool.active { border-color: #5ea4de; }
.tool .list-icon { width: 26px; height: 28px; }
.tree { flex: 1; border: 2px solid #97959a; background: #fdfdfd; padding: 2px 2px 2px; display: flex; flex-direction: column; overflow: hidden; width: 398px; }
.row { height: 36px; flex: none; display: flex; align-items: center; padding-left: 52px; white-space: nowrap; line-height: 32px; padding-bottom: 2px; }
.row.root { padding: 0 0 3px 12px; height: 37px; }
.row.wide { letter-spacing: .14px; }
.row b { font-size: 22px; letter-spacing: -.6px; color: #0c0c10; }
.layers { width: 32px; height: 26px; margin: 0 12px 0 12px; }
.minus { width: 18px; height: 18px; border: 2px solid #b0aeb2; background: linear-gradient(#555, #555) center / 10px 2px no-repeat #eeedee; margin-top: 5px; }
.check { width: 22px; height: 22px; border: 2px solid #151515; margin: 0 16px; background: #fff; position: relative; }
.check.on::after { content: ""; position: absolute; left: 2px; top: 3px; width: 14px; height: 6px; border: solid #000; border-width: 0 0 4px 4px; transform: rotate(-45deg) scale(.95); }
.legend { height: 36px; flex: none; padding-left: 116px; display: flex; align-items: center; }
.swatch { width: 30px; height: 22px; border: 2px solid #878787; }
.pink { background: #edcaf5; } .blue { background: #cbe6f5; } .green { background: #c8f0d0; }
.plum { background: #d59bbc; border-color: #94506f; } .olive { background: #d7d69c; border-color: #afcf6b; }
.line { width: 34px; height: 5px; margin-left: -2px; border-radius: 3px; background: #b1b1b2; }

/* Scroll bars */
.hscroll, .vscroll { display: flex; background: #fff; }
.vscroll { flex-direction: column; }
.hscroll .sb, .vscroll .sb { flex: none; background: #fff; }
.thumb { background: #dcdcdd; display: grid; place-items: center; flex: none; }
.track { flex: 1; }
.ridges { width: 16px; height: 14px; background: repeating-linear-gradient(90deg, #6b6b6d 0 4px, transparent 4px 6px); }
.ridges.v { width: 14px; height: 16px; background: repeating-linear-gradient(#6b6b6d 0 4px, transparent 4px 6px); }
.toc-scroll { margin-top: auto; height: 33px; border: 2px solid #cfcdd1; }
.toc-scroll .sb { width: 32px; height: 29px; }
.toc-scroll .sb:last-child { border-left: 2px solid #cfcdd1; }
.toc-scroll .thumb { width: 266px; border: solid #a9a9ab; border-width: 0 2px; }

.mapframe { width: 1669px; margin-left: 10px; display: grid; grid-template: 852px 35px / 1635px 31px; border: solid #737176; border-width: 3px 0 0 3px; background: #efeef0; height: 889px; }
.map { width: 1635px; height: 850px; overflow: hidden; }
.map path { vector-effect: non-scaling-stroke; stroke-width: 1.7px; stroke-linejoin: round; }
.land { fill: #d7d69c; }
.land.line { stroke: #a9d362; }
.core { fill: #d69bbd; }
.core.line { stroke: #8c4669; }
.void { fill: #fff; }
.road { fill: none; stroke: #a9d265; }
.block { fill: none; stroke: #8c4669; }
.map .strip { fill: none; stroke: #a8d45c; stroke-width: 3.5px; }
.circle { fill: #eecbf6; stroke: #777; }
.map-v { margin-left: 1px; width: 31px; border-right: 2px solid #aaa8ac; border-bottom: 2px solid #c4c2c6; }
.map-v .sb { width: 29px; height: 34px; border-bottom: 2px solid #c9c7cb; }
.map-v .sb:last-child { border: 0; border-top: 2px solid #c9c7cb; }
.map-v .track.top { flex: 0 0 299px; }
.map-v .thumb { height: 188px; border: solid #aeaeb0; border-width: 2px 0; }
.map-bottom { display: flex; padding-top: 3px; height: 32px; }
.view { width: 35px; display: grid; place-items: center; }
.view svg { width: 18px; height: 18px; margin-top: -4px; }
.view.on { background: #dcebfa; border: solid #42a5de; border-width: 0 2px 3px 1px; }
.view.page { width: 33px; }
.bar { width: 2px; background: #bdbbbf; }
.refresh { margin-left: 12px; } .refresh svg { width: 19px; }
.pause { width: 35px; }
.map-h { flex: 1; border-bottom: 2px solid #aaa8ac; border-right: 2px solid #c9c7cb; }
.map-h .sb { width: 33px; height: 27px; border: solid #c9c7cb; border-width: 0 2px 0 0; }
.map-h .sb:first-child { border-left-width: 2px; }
.map-h .sb:last-child { border-width: 0 0 0 2px; }
.map-h .track.left { flex: 0 0 347px; }
.map-h .thumb { width: 665px; border: solid #a9a9ab; border-width: 0 2px; }

.dock { margin-left: auto; width: 40px; padding-top: 5px; color: #6f6d74; }
.tab { height: 141px; border: 2px solid #b3b1b6; border-right: 0; border-radius: 8px 0 0 8px; background: #f1f0f2; padding: 7px 0 0 2px; }
.tab svg { width: 32px; height: 32px; }
.tab span { writing-mode: vertical-rl; font-size: 23.8px; line-height: 32px; margin: 7px 0 0 2px; display: block; width: 32px; white-space: nowrap; }
.searchtab { height: 135px; }

.status { height: 42px; flex: none; display: flex; align-items: center; background: #f0eff1; font-size: 22px; }
.status span { margin-left: 1585px; padding-top: 1px; }
.status svg { width: 18px; height: 18px; margin: 14px 4px 0 auto; }

/* Report Wizard */
.dialog { position: absolute; left: 536px; top: 211px; width: 1084px; height: 736px; background: #9e9d9f; border: 2px solid #48464a; padding: 0 13px 13px 14px; font-family: "Liberation Sans", Arial, sans-serif; font-size: 22.2px; color: #22232b; display: flex; flex-direction: column; }
.dialog-title { height: 60px; flex: none; text-align: center; font: 28.7px/58px "Open Sans", sans-serif; color: #17171a; position: relative; }
.dialog-close { position: absolute; right: -3px; top: 0; width: 67px; height: 42px; background: #c45850; border: 2px solid #5d3a3c; border-top: 0; display: grid; place-items: center; }
.dialog-close svg { width: 18px; height: 16px; }
.dialog-body { flex: 1; background: #f0eff1; border: 1px solid #d6e0e4; display: flex; flex-direction: column; }
.pane { height: 563px; flex: none; border-bottom: 2px solid #b4b4b6; padding-left: 27px; display: grid; grid-template-columns: 436px 78px 436px 1fr; grid-template-rows: 84px 1fr; }
.question { grid-column: 1 / -1; padding: 43px 0 0 4px; line-height: 28px; }
.col { width: 436px; }
.col label { display: block; height: 43px; line-height: 28px; padding: 9px 0 0 3px; letter-spacing: .3px; }
.col label.second { height: 74px; padding-top: 40px; }
.right label { margin-left: -4px; letter-spacing: -.05px; }
.combo { height: 42px; border: 2px solid #8b8b8e; background: #fff; display: flex; align-items: center; padding: 0 8px 1px 4px; }
.combo.none { padding-left: 6px; }
.feat { width: 32px; height: 30px; margin: 0 4px 2px 0; }
.chev { width: 16px; height: 14px; margin: 3px 0 0 auto; }
.listbox { height: 216px; border: 2px solid #8b8b8e; background: #fdfdfd; display: flex; justify-content: space-between; padding: 2px; }
.listbox ul { letter-spacing: -.25px; padding-top: 1px; }
.listbox .caps { letter-spacing: -.6px; }
.listbox li { line-height: 26px; height: 26px; padding-left: 4px; }
.list-v { width: 34px; border: 2px solid #cfcdd1; }
.list-v .sb { width: 30px; height: 32px; }
.list-v .sb:last-child { border-top: 2px solid #cfcdd1; }
.list-v .thumb { height: 50px; border: 2px solid #b9b9bb; border-width: 2px 0; }
.btn { width: 156px; height: 42px; background: #dddcde; border: 2px solid #858488; padding-bottom: 2px; }
.dataset { width: 328px; margin: 16px 0 0 2px; }
.movers { padding: 161px 0 0 22px; display: flex; flex-direction: column; gap: 6px; }
.movers.order { padding-left: 14px; }
.sq { width: 36px; height: 36px; border: 2px solid #858488; background: #dddcde; display: grid; place-items: center; }
.sq svg { width: 20px; height: 20px; }
.sq.dim { background: #f4f3f5; border-color: #bcc0c4; }
.sq.dim svg { width: 18px; height: 18px; }
.sq.all { margin-top: 50px; }
.sq.focus { border-color: #5793bf; }
.actions { display: flex; padding: 23px 0 0 315px; }
.back { margin-left: 38px; background: #f5f4f6; border-color: #c2c6ca; color: #a9a9ad; }
.next { margin-left: 16px; }
.finish { margin-left: 30px; }
```
